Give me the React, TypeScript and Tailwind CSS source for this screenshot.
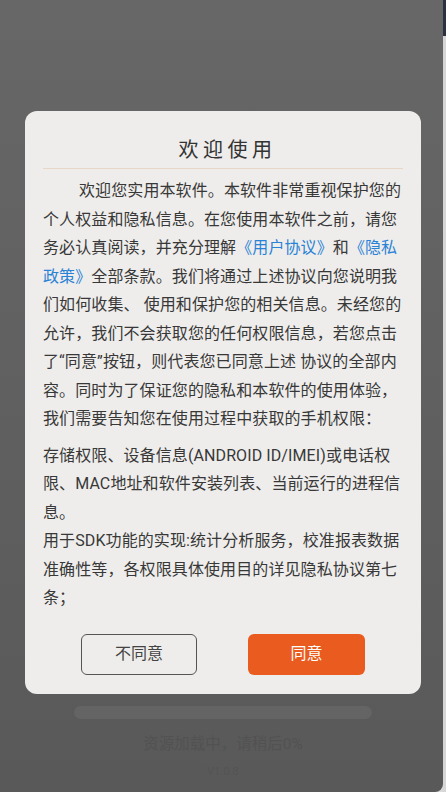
import React from "react";

const font = { fontFamily: 'Roboto, "Noto Sans CJK SC", sans-serif' };

function Link({ children }: { children: React.ReactNode }) {
  return <span className="text-[#2a82d6]">{children}</span>;
}

function PrivacyDialog() {
  return (
    <div className="w-[396px] rounded-[12px] bg-[#eeedeb] px-[18px] pt-[25px] pb-[19px]">
      <h1 className="pl-[9px] text-center text-[20px] leading-[28px] tracking-[4.5px] text-[#333333] font-normal">
        欢迎使用
      </h1>
      <div className="mt-[4px] h-px bg-[#e8d6c6]" />

      <div className="mt-[8px] text-[16px] leading-[28.5px] tracking-[0.1px] text-[#383838]">
        <p className="indent-[36px]">
          欢迎您实用本软件。本软件非常重视保护您的个人权益和隐私信息。在您使用本软件之前，请您务必认真阅读，并充分理解
          <Link>《用户协议》</Link>和<Link>《隐私政策》</Link>
          全部条款。我们将通过上述协议向您说明我们如何收集、 使用和保护您的相关信息。未经您的允许，我们不会获取您的任何权限信息，若您点击了“同意”按钮，则代表您已同意上述 协议的全部内容。同时为了保证您的隐私和本软件的使用体验，我们需要告知您在使用过程中获取的手机权限：
        </p>
        <p className="mt-[8px]">
          存储权限、设备信息(ANDROID ID/IMEI)或电话权限、MAC地址和软件安装列表、当前运行的进程信息。
        </p>
        <p>用于SDK功能的实现:统计分析服务，校准报表数据准确性等，各权限具体使用目的详见隐私协议第七条；</p>
      </div>

      <div className="mt-[21px] flex justify-center gap-[51px]">
        <button className="h-[41px] w-[116px] rounded-[6px] border-[1.5px] border-[#555555] text-[16px] text-[#444444]">
          不同意
        </button>
        <button className="h-[41px] w-[117px] rounded-[6px] bg-[#e95b1e] text-[16px] text-white">
          同意
        </button>
      </div>
    </div>
  );
}

export default function App() {
  return (
    <div className="flex h-[792px] w-[446px] overflow-hidden bg-[#d9d9d9]" style={font}>
      <div className="flex flex-1 flex-col items-center rounded-br-[8px] bg-gradient-to-b from-[#676767] to-[#595959] pl-[3px]">
        <div className="mt-[111px]">
          <PrivacyDialog />
        </div>
        <div className="mt-[12px] h-[13px] w-[298px] rounded-full bg-[#646464]" />
        <div className="mt-[14px] text-[15.5px] leading-[22px] text-[#525252]">资源加载中，请稍后0%</div>
        <div className="mt-[10px] text-[11px] leading-[14px] text-[#545454]">V1.0.8</div>
      </div>
      <div className="flex w-[3px] flex-col">
        <div className="h-[36px] bg-[#2a3142]" />
        <div className="flex-1 bg-[#d6d6d6]" />
      </div>
    </div>
  );
}
